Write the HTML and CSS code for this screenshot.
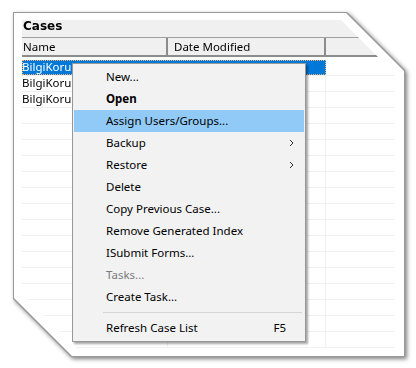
FILE: index.html
```html
<!DOCTYPE html>
<html lang="en">
<head>
    <meta charset="UTF-8">
    <meta name="viewport" content="width=device-width, initial-scale=1.0">
    <title>Cases</title>
    <link rel="stylesheet" href="styles.css">
</head>
<body>
    <div class="frame-shadow">
        <div class="frame">
            <div class="sheet">
                <div class="screen">
                    <div class="title">Cases</div>
                    <div class="list-head">
                        <div class="head-cell col-name">Name</div>
                        <div class="head-cell col-date">Date Modified</div>
                        <div class="head-cell col-rest"></div>
                    </div>
                    <div class="rows">
                        <div class="row">
                            <div class="sel">
                                <div class="cell col-name">BilgiKoru Training</div>
                                <div class="cell col-date">2/24/2021 10:34:45 AM</div>
                            </div>
                            <div class="cell col-rest"></div>
                        </div>
                        <div class="row"><div class="cell col-name">BilgiKoru</div><div class="cell col-date"></div><div class="cell col-rest"></div></div>
                        <div class="row"><div class="cell col-name">BilgiKoru</div><div class="cell col-date"></div><div class="cell col-rest"></div></div>
                        <div class="row"><div class="cell col-name"></div><div class="cell col-date"></div><div class="cell col-rest"></div></div>
                        <div class="row"><div class="cell col-name"></div><div class="cell col-date"></div><div class="cell col-rest"></div></div>
                        <div class="row"><div class="cell col-name"></div><div class="cell col-date"></div><div class="cell col-rest"></div></div>
                        <div class="row"><div class="cell col-name"></div><div class="cell col-date"></div><div class="cell col-rest"></div></div>
                        <div class="row"><div class="cell col-name"></div><div class="cell col-date"></div><div class="cell col-rest"></div></div>
                        <div class="row"><div class="cell col-name"></div><div class="cell col-date"></div><div class="cell col-rest"></div></div>
                        <div class="row"><div class="cell col-name"></div><div class="cell col-date"></div><div class="cell col-rest"></div></div>
                        <div class="row"><div class="cell col-name"></div><div class="cell col-date"></div><div class="cell col-rest"></div></div>
                        <div class="row"><div class="cell col-name"></div><div class="cell col-date"></div><div class="cell col-rest"></div></div>
                        <div class="row"><div class="cell col-name"></div><div class="cell col-date"></div><div class="cell col-rest"></div></div>
                        <div class="row"><div class="cell col-name"></div><div class="cell col-date"></div><div class="cell col-rest"></div></div>
                        <div class="row"><div class="cell col-name"></div><div class="cell col-date"></div><div class="cell col-rest"></div></div>
                        <div class="row"><div class="cell col-name"></div><div class="cell col-date"></div><div class="cell col-rest"></div></div>
                        <div class="row"><div class="cell col-name"></div><div class="cell col-date"></div><div class="cell col-rest"></div></div>
                        <div class="row"><div class="cell col-name"></div><div class="cell col-date"></div><div class="cell col-rest"></div></div>
                    </div>
                </div>
            </div>
        </div>
    </div>

    <!-- context menu over the list -->
    <ul class="menu">
        <li class="item">New...</li>
        <li class="item bold">Open</li>
        <li class="item hover">Assign Users/Groups...</li>
        <li class="item">Backup
            <svg class="arrow" width="5" height="8" viewBox="0 0 5 8"><path d="M1 1l3 3-3 3" fill="none" stroke="#333" stroke-width="1"/></svg>
        </li>
        <li class="item">Restore
            <svg class="arrow" width="5" height="8" viewBox="0 0 5 8"><path d="M1 1l3 3-3 3" fill="none" stroke="#333" stroke-width="1"/></svg>
        </li>
        <li class="item">Delete</li>
        <li class="item">Copy Previous Case...</li>
        <li class="item">Remove Generated Index</li>
        <li class="item">ISubmit Forms...</li>
        <li class="item disabled">Tasks...</li>
        <li class="item">Create Task...</li>
        <li class="separator"></li>
        <li class="item">Refresh Case List <span class="shortcut">F5</span></li>
    </ul>
</body>
</html>
```

FILE: styles.css
```css
* {
    margin: 0;
    padding: 0;
    box-sizing: border-box;
}
html, body {
    height: 100%;
}
body {
    position: relative;
    background: #fff;
    font-family: "Noto Sans", "Open Sans", sans-serif;
    font-size: 11.5px;
    color: #000;
    padding: 12px 0 0 13px;
}

/* the clipped screenshot frame */
.frame-shadow {
    width: 392px;
    height: 345px;
    filter: drop-shadow(2px 2px 2px rgba(0, 0, 0, .5));
}
.frame {
    height: 100%;
    padding: 1px;
    background: #9a9a9a;
    clip-path: polygon(0 0, calc(100% - 58px) 0, 100% 58px, 100% 100%, 58px 100%, 0 calc(100% - 58px));
}
.sheet {
    height: 100%;
    padding: 7px 9px 8px 8px;
    background: #fff;
    clip-path: polygon(0 0, calc(100% - 58px) 0, 100% 58px, 100% 100%, 58px 100%, 0 calc(100% - 58px));
}
.screen {
    height: 100%;
    overflow: hidden;
    background: #fff;
    clip-path: polygon(0 0, calc(100% - 54px) 0, 100% 54px, 100% 100%, 54px 100%, 0 calc(100% - 54px));
}

.title {
    height: 17px;
    padding-left: 1px;
    background: #f0f0f0;
    font-family: "DejaVu Sans", sans-serif;
    font-weight: bold;
    font-size: 12px;
    line-height: 12px;
}

.list-head {
    display: flex;
    height: 20px;
    background: #f0f0f0;
    border-top: 1px solid #a0a0a0;
    border-bottom: 2px solid #8c8c8c;
}
.head-cell {
    padding-top: 1px;
    line-height: 16px;
    white-space: nowrap;
    border-right: 2px solid #8c8c8c;
}
.head-cell.col-name {
    padding-left: 1px;
}
.head-cell.col-date {
    padding-left: 6px;
}
.head-cell.col-rest {
    border-right: 0;
}

.col-name {
    width: 146px;
    flex: none;
}
.col-date {
    width: 158px;
    flex: none;
}
.col-rest {
    flex: 1;
}

.rows {
    padding-top: 3px;
}
.row {
    display: flex;
    height: 16px;
    border-bottom: 1px solid #f0f0f0;
}
.cell {
    height: 15px;
    line-height: 14px;
    white-space: nowrap;
    overflow: hidden;
    border-right: 1px solid #f0f0f0;
}
.cell.col-date {
    padding-left: 6px;
}
.cell.col-rest {
    border-right: 0;
}
.sel {
    display: flex;
    height: 15px;
    background: #0078d7;
    color: #fff;
    outline: 1px dotted #e9b27a;
    outline-offset: -1px;
}
.sel .cell {
    border-right: 0;
}

/* context menu */
.menu {
    position: absolute;
    left: 72px;
    top: 63px;
    width: 234px;
    height: 279px;
    padding: 2px 1px;
    list-style: none;
    background: #f2f2f2;
    border: 1px solid #979797;
    box-shadow: 2px 2px 2px rgba(0, 0, 0, .35);
}
.item {
    display: flex;
    align-items: center;
    height: 22px;
    padding: 0 10px 0 32px;
    line-height: 22px;
    white-space: nowrap;
}
.item.bold {
    font-weight: bold;
}
.item.hover {
    background: #91c9f7;
}
.item.disabled {
    color: #7a7a7a;
}
.arrow {
    margin-left: auto;
}
.shortcut {
    margin-left: auto;
    margin-right: 8px;
}
.separator {
    height: 9px;
    padding-top: 4px;
    margin: 0 2px 0 29px;
}
.separator::before {
    content: "";
    display: block;
    border-top: 1px solid #d5d5d5;
}
```
